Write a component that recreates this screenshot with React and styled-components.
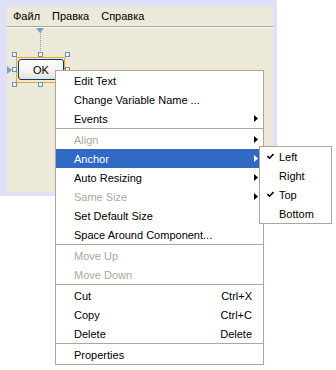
import React from "react";
import styled, { createGlobalStyle } from "styled-components";

const GlobalStyle = createGlobalStyle`
  html, body { margin: 0; padding: 0; background: #ffffff; }
  body { font-family: Tahoma, "Liberation Sans", Arial, sans-serif; font-size: 11px; color: #000; }
  * { box-sizing: border-box; }
`;

const Page = styled.div`
  position: relative;
  width: 336px;
  height: 370px;
  overflow: hidden;
`;

const Frame = styled.div`
  width: 277px;
  height: 196px;
  padding: 7px 4px 4px 7px;
  background: #e0e0f8;
`;

const Panel = styled.div`
  height: 100%;
  background: #ece9d8;
  display: flex;
  flex-direction: column;
`;

const MenuBar = styled.div`
  height: 20px;
  flex: none;
  display: flex;
  align-items: center;
  padding-left: 0;
  border-bottom: 1px solid #aca899;
  box-shadow: 0 1px 0 #ffffff;
`;

const MenuBarItem = styled.span`
  padding: 0 6px;
  line-height: 19px;
`;

const Canvas = styled.div`
  position: relative;
  flex: 1;
`;

const AnchorTop = styled.svg`
  position: absolute;
  left: 29px;
  top: 1px;
`;

const AnchorLeft = styled.svg`
  position: absolute;
  left: 0;
  top: 39px;
`;

const DottedLine = styled.div`
  position: absolute;
  left: 33px;
  top: 5px;
  width: 1px;
  height: 20px;
  background: repeating-linear-gradient(to bottom, #7d9ec8 0 1px, transparent 1px 2px);
`;

const Selection = styled.div`
  position: absolute;
  left: 9px;
  top: 30px;
  width: 49px;
  height: 26px;
  border: 1px solid #f5a414;
`;

const DesignButton = styled.div`
  position: absolute;
  left: 11px;
  top: 32px;
  width: 46px;
  height: 21px;
  border: 1px solid #003c74;
  border-radius: 3px;
  background: linear-gradient(to bottom, #ffffff 0%, #f4f3ee 60%, #e3e1d6 100%);
  display: flex;
  align-items: center;
  justify-content: center;
  font-size: 11px;
`;

const Handle = styled.div`
  position: absolute;
  width: 5px;
  height: 5px;
  border: 1px solid #6f8fb6;
  background: linear-gradient(135deg, #ffffff 0%, #dfe7f2 100%);
`;

const Menu = styled.div`
  position: absolute;
  left: ${(p) => p.$left}px;
  top: ${(p) => p.$top}px;
  width: ${(p) => p.$width}px;
  background: #ffffff;
  border: 1px solid #aca899;
`;

const Item = styled.div`
  height: 19px;
  display: flex;
  align-items: center;
  padding-left: ${(p) => p.$indent}px;
  padding-right: 5px;
  color: ${(p) => (p.$active ? "#ffffff" : p.$disabled ? "#aca899" : "#000000")};
  background: ${(p) => (p.$active ? "#316ac5" : "transparent")};
  white-space: nowrap;
  position: relative;
`;

const Label = styled.span`
  flex: 1;
`;

const Shortcut = styled.span`
  margin-right: 6px;
`;

const Arrow = styled.svg`
  flex: none;
`;

const Check = styled.svg`
  position: absolute;
  left: 7px;
  top: 6px;
`;

const Separator = styled.div`
  height: 2px;
  border-top: 1px solid #aca899;
`;

const ArrowIcon = ({ color }) => (
  <Arrow width="4" height="7" viewBox="0 0 4 7">
    <polygon points="0,0 4,3.5 0,7" fill={color} />
  </Arrow>
);

const CheckIcon = () => (
  <Check width="7" height="7" viewBox="0 0 7 7">
    <path d="M0.5 3 L2.5 5.2 L6.5 1" stroke="#000" strokeWidth="1.6" fill="none" />
  </Check>
);

const mainMenu = [
  { label: "Edit Text" },
  { label: "Change Variable Name ..." },
  { label: "Events", sub: true },
  { sep: true },
  { label: "Align", sub: true, disabled: true },
  { label: "Anchor", sub: true, active: true },
  { label: "Auto Resizing", sub: true },
  { label: "Same Size", sub: true, disabled: true },
  { label: "Set Default Size" },
  { label: "Space Around Component..." },
  { sep: true },
  { label: "Move Up", disabled: true },
  { label: "Move Down", disabled: true },
  { sep: true },
  { label: "Cut", shortcut: "Ctrl+X" },
  { label: "Copy", shortcut: "Ctrl+C" },
  { label: "Delete", shortcut: "Delete" },
  { sep: true },
  { label: "Properties" },
];

const anchorMenu = [
  { label: "Left", checked: true },
  { label: "Right" },
  { label: "Top", checked: true },
  { label: "Bottom" },
];

const handles = [
  [5, 25], [31, 25], [58, 25],
  [5, 40], [58, 40],
  [5, 55], [31, 55], [58, 55],
];

export default function App() {
  return (
    <Page>
      <GlobalStyle />
      <Frame>
        <Panel>
          <MenuBar>
            <MenuBarItem>Файл</MenuBarItem>
            <MenuBarItem>Правка</MenuBarItem>
            <MenuBarItem>Справка</MenuBarItem>
          </MenuBar>
          <Canvas>
            <AnchorTop width="8" height="5" viewBox="0 0 8 5">
              <polygon points="0,0 8,0 4,5" fill="#7d9ec8" />
            </AnchorTop>
            <DottedLine />
            <AnchorLeft width="5" height="8" viewBox="0 0 5 8">
              <polygon points="0,0 5,4 0,8" fill="#7d9ec8" />
            </AnchorLeft>
            <Selection />
            <DesignButton>OK</DesignButton>
            {handles.map(([x, y], i) => (
              <Handle key={i} style={{ left: x, top: y }} />
            ))}
          </Canvas>
        </Panel>
      </Frame>

      <Menu $left={55} $top={70} $width={209}>
        {mainMenu.map((it, i) =>
          it.sep ? (
            <Separator key={i} />
          ) : (
            <Item key={i} $indent={18} $active={it.active} $disabled={it.disabled}>
              <Label>{it.label}</Label>
              {it.shortcut && <Shortcut>{it.shortcut}</Shortcut>}
              {it.sub && <ArrowIcon color={it.active ? "#ffffff" : "#000000"} />}
            </Item>
          )
        )}
      </Menu>

      <Menu $left={259} $top={146} $width={73}>
        {anchorMenu.map((it, i) => (
          <Item key={i} $indent={19}>
            {it.checked && <CheckIcon />}
            <Label>{it.label}</Label>
          </Item>
        ))}
      </Menu>
    </Page>
  );
}
